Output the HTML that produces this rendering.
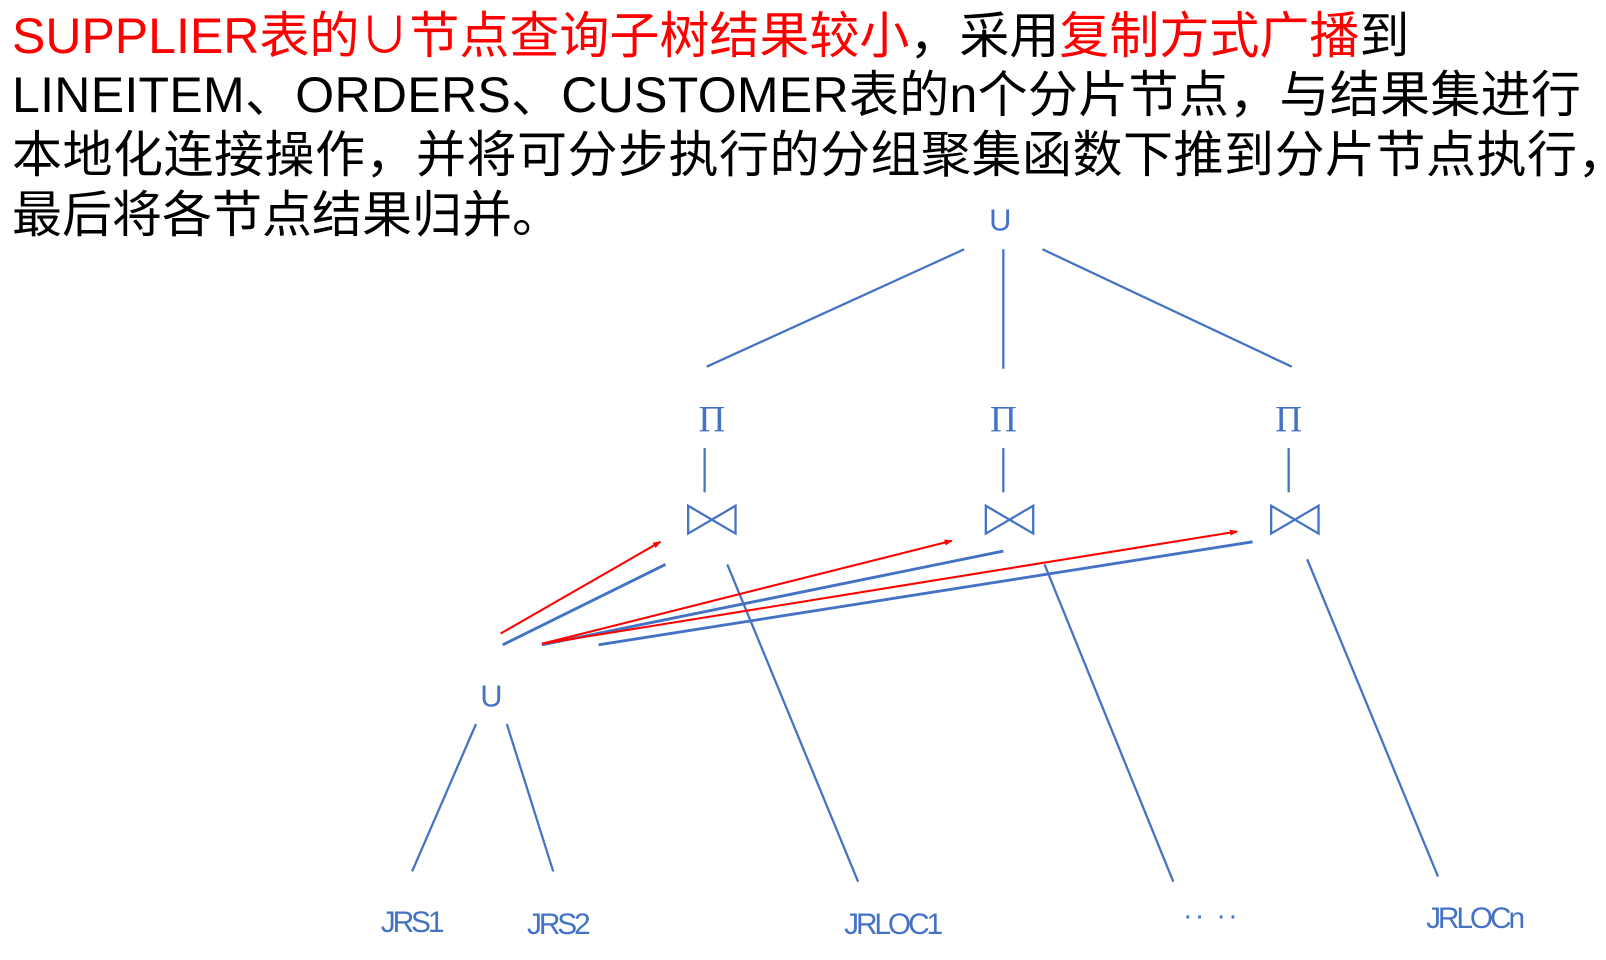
<!DOCTYPE html>
<html><head><meta charset="utf-8"><style>
body{margin:0;width:1606px;height:960px;background:#fff;overflow:hidden;position:relative;font-family:"Liberation Sans","Noto Sans CJK SC",sans-serif}
.l{position:absolute;left:12px;font-size:50px;line-height:60px;white-space:nowrap;color:#000}
.r{color:#f00}
</style></head><body>
<div class="l" style="top:6px"><span class="r">SUPPLIER表的∪节点查询子树结果较小</span>，采用<span class="r">复制方式广播</span>到</div>
<div class="l" style="top:65px;letter-spacing:0.3px">LINEITEM、ORDERS、CUSTOMER表的n个分片节点，与结果集进行</div>
<div class="l" style="top:125px;letter-spacing:0.5px">本地化连接操作，并将可分步执行的分组聚集函数下推到分片节点执行，</div>
<div class="l" style="top:185px">最后将各节点结果归并。</div>
<svg style="position:absolute;left:0;top:0" width="1606" height="960" viewBox="0 0 1559 932">
<defs><marker id="a" markerWidth="8" markerHeight="6" refX="7" refY="3" orient="auto" markerUnits="userSpaceOnUse"><path d="M0,0L8,3L0,6z" fill="#f00"/></marker></defs>
<g transform="translate(-4,-2)">
<g stroke="#4472c4" stroke-width="2.2" fill="none">
<line x1="940" y1="244" x2="690" y2="358"/><line x1="978" y1="244" x2="978" y2="360"/><line x1="1016" y1="244" x2="1258" y2="358"/>
<line x1="688" y1="437" x2="688" y2="480"/><line x1="978" y1="437" x2="978" y2="480"/><line x1="1255" y1="437" x2="1255" y2="480"/>
<path d="M672,493L672,520L718,493L718,520Z"/>
<path d="M961,493L961,520L1007,493L1007,520Z"/>
<path d="M1238,493L1238,520L1284,493L1284,520Z"/>
<line x1="650" y1="550" x2="492" y2="628" stroke-width="2.8"/><line x1="978" y1="537" x2="530" y2="628" stroke-width="2.8"/><line x1="1220" y1="528" x2="585" y2="628" stroke-width="2.8"/>
<line x1="710" y1="550" x2="837" y2="858"/><line x1="1018" y1="550" x2="1143" y2="858"/><line x1="1273" y1="545" x2="1400" y2="853"/>
<line x1="466" y1="705" x2="404" y2="848"/><line x1="496" y1="705" x2="541" y2="848"/>
</g>
<g stroke="#f00" stroke-width="2" marker-end="url(#a)">
<line x1="490" y1="617" x2="645" y2="528"/><line x1="530" y1="627" x2="928" y2="527"/><line x1="530" y1="627" x2="1205" y2="518"/>
</g>
<g fill="#4472c4" font-family="Liberation Sans,sans-serif" text-anchor="middle">
<text x="975" y="226" font-size="30">U</text>
<text x="481" y="688" font-size="30">U</text>
<text x="695" y="421" font-size="36" font-family="Liberation Serif,serif">Π</text>
<text x="978" y="421" font-size="36" font-family="Liberation Serif,serif">Π</text>
<text x="1255" y="421" font-size="36" font-family="Liberation Serif,serif">Π</text>
<g font-size="29" letter-spacing="-3">
<text x="403" y="907">JRS1</text><text x="545" y="909">JRS2</text><text x="870" y="909">JRLOC1</text><text x="1435" y="903">JRLOCn</text>
</g>
<text x="1180" y="900" font-size="28" letter-spacing="2">·· ··</text>
</g></g>
</svg>
</body></html>
